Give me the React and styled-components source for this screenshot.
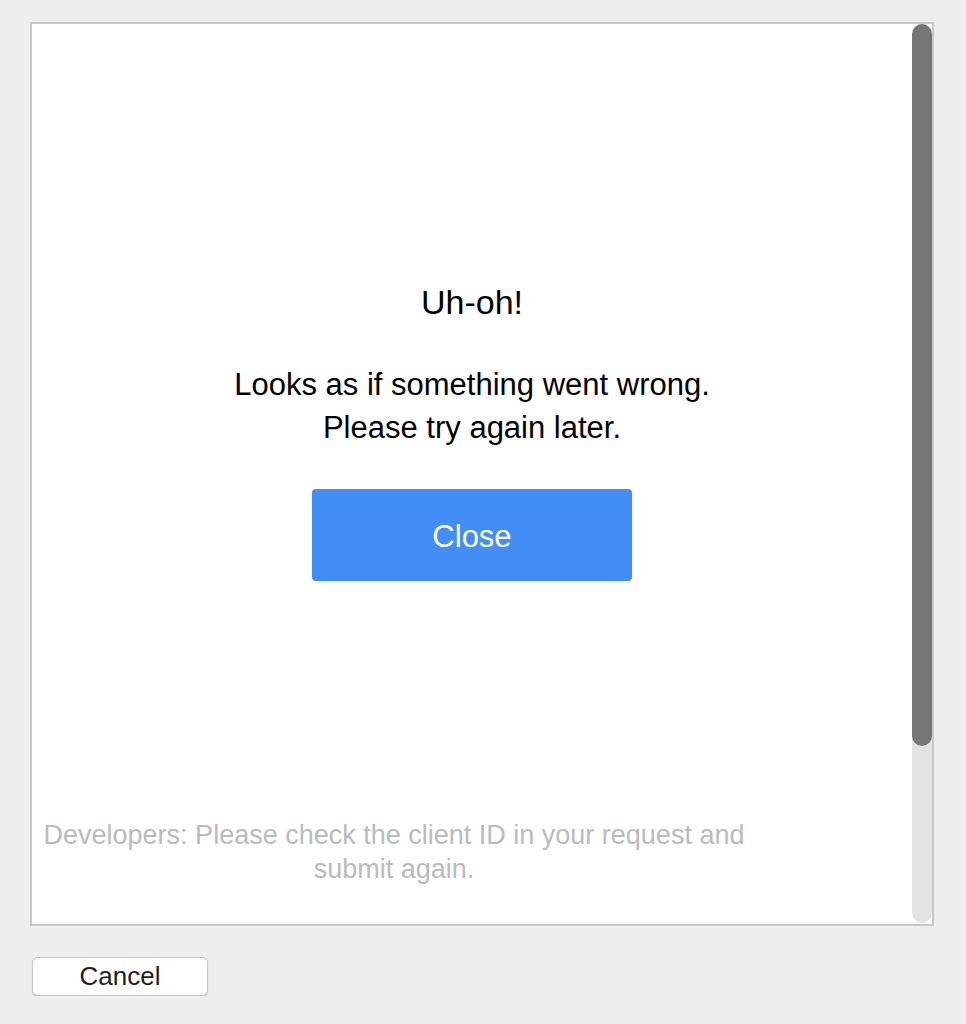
import React from "react";
import styled, { createGlobalStyle } from "styled-components";

const Global = createGlobalStyle`
  html, body {
    margin: 0;
    padding: 0;
    background: #eeeeee;
  }
  body {
    font-family: "Liberation Sans", Arial, Helvetica, sans-serif;
  }
`;

const Page = styled.div`
  padding: 22px 0 0 30px;
  display: flex;
  flex-direction: column;
  align-items: flex-start;
`;

const Frame = styled.div`
  box-sizing: border-box;
  width: 904px;
  height: 904px;
  border: 2px solid #c9c9c9;
  background: #ffffff;
  display: flex;
  flex-direction: row;
`;

const Content = styled.div`
  flex: 1;
  display: flex;
  flex-direction: column;
  align-items: center;
  padding-top: 258px;
  box-sizing: border-box;
  height: 100%;
`;

const Heading = styled.h1`
  margin: 0;
  font-size: 34px;
  line-height: 40px;
  font-weight: 400;
  color: #000;
  text-align: center;
`;

const Message = styled.p`
  margin: 41px 0 0;
  font-size: 31px;
  line-height: 43px;
  color: #000;
  text-align: center;
`;

const PrimaryButton = styled.button`
  margin-top: 40px;
  width: 320px;
  height: 92px;
  box-sizing: border-box;
  padding: 4px 0 0;
  border: none;
  border-radius: 4px;
  background: #428ef6;
  color: #ffffff;
  font-family: inherit;
  font-size: 31px;
  cursor: pointer;
`;

const DevNote = styled.p`
  margin: auto 0 0 10px;
  padding-bottom: 38px;
  align-self: flex-start;
  width: 704px;
  font-size: 27px;
  line-height: 34px;
  color: #b9bbc0;
  text-align: center;
`;

const ScrollTrack = styled.div`
  width: 20px;
  height: 899px;
  border-radius: 10px;
  background: #e3e3e3;
  display: flex;
  flex-direction: column;
`;

const ScrollThumb = styled.div`
  width: 20px;
  border-radius: 10px;
  background: #767676;
`;

const CancelButton = styled.button`
  margin: 31px 0 0 2px;
  width: 176px;
  height: 39px;
  box-sizing: border-box;
  background: #ffffff;
  border: 1px solid #c6c6c6;
  border-radius: 6px;
  box-shadow: 0 1px 1px rgba(0, 0, 0, 0.18);
  color: #1e1e1e;
  font-family: inherit;
  font-size: 26px;
  padding: 0;
  cursor: pointer;
`;

export default function App() {
  const thumbHeight = 722;
  return (
    <>
      <Global />
      <Page>
        <Frame>
          <Content>
            <Heading>Uh-oh!</Heading>
            <Message>
              Looks as if something went wrong.
              <br />
              Please try again later.
            </Message>
            <PrimaryButton>Close</PrimaryButton>
            <DevNote>
              Developers: Please check the client ID in your request and submit
              again.
            </DevNote>
          </Content>
          <ScrollTrack>
            <ScrollThumb style={{ height: thumbHeight }} />
          </ScrollTrack>
        </Frame>
        <CancelButton>Cancel</CancelButton>
      </Page>
    </>
  );
}
